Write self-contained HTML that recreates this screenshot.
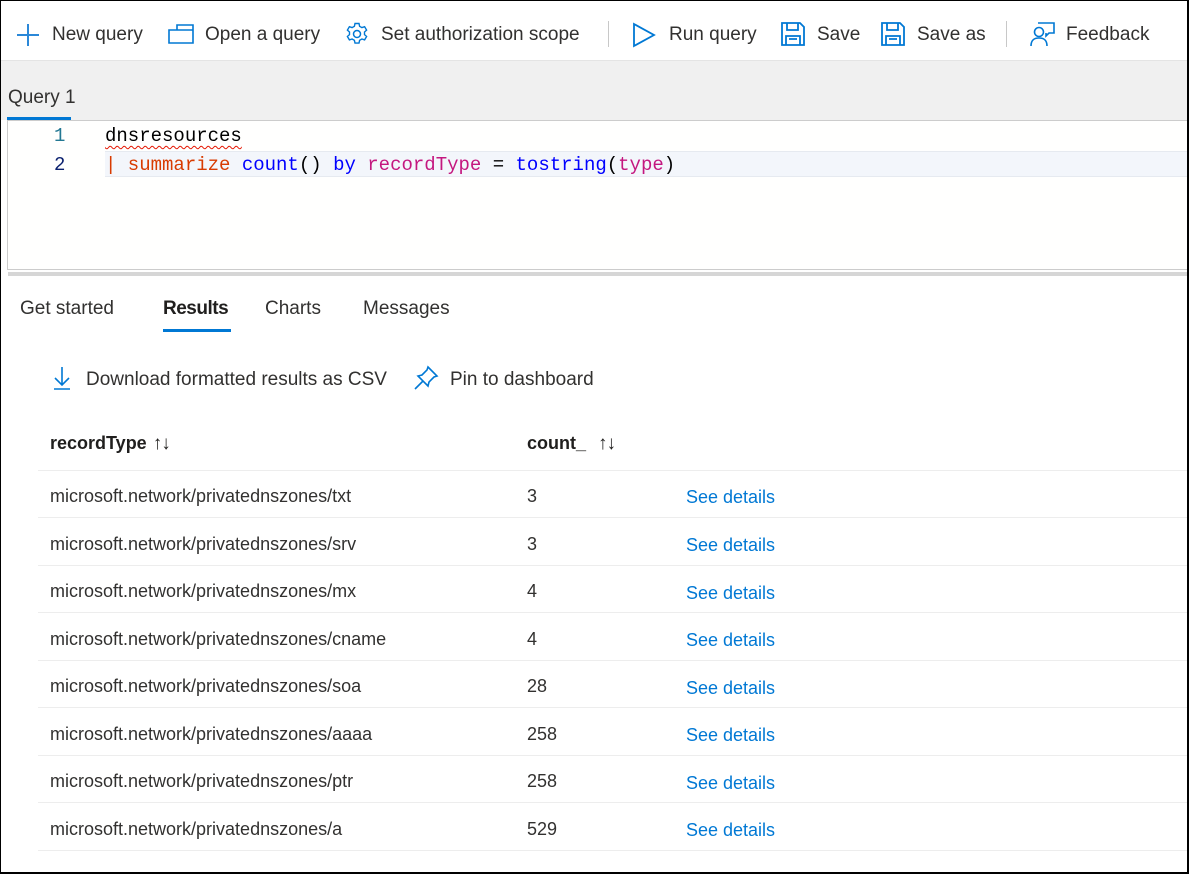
<!DOCTYPE html>
<html><head><style>
*{margin:0;padding:0;box-sizing:border-box}
body{width:1189px;height:874px;overflow:hidden;background:#fff;font-family:"Liberation Sans",sans-serif;color:#323130;position:relative}
.frame{position:absolute;left:0;top:0;width:1189px;height:874px;border:1px solid #000;border-right-width:2px;border-bottom-width:2px;pointer-events:none;z-index:10}
.a{position:absolute;white-space:nowrap}
.tb{font-size:19px;top:24px}
.ic{position:absolute}
.gray{position:absolute;left:1px;top:60px;width:1187px;height:60px;background:#f0f0f0;border-top:1px solid #e4e4e4}
.editor{position:absolute;left:7px;top:120px;width:1182px;height:150px;background:#fffffe;border-left:1px solid #ccc;border-top:1px solid #ccc;border-bottom:1px solid #ccc}
.code{font-family:"Liberation Mono",monospace;font-size:19px}
.row{position:absolute;left:38px;width:1150px;height:1px;background:#ededed}
.t{font-size:18px}
.lnk{color:#0078d4;font-size:18px}
.srt{font-weight:normal;font-size:19px;margin-left:6px;letter-spacing:-1px}
</style></head><body>
<div class="frame"></div>
<svg class="ic" style="left:16px;top:23px" width="24" height="24"><path d="M12 1V23M1 12H23" stroke="#2b88d8" stroke-width="2"/></svg>
<div class="a tb" style="left:52px">New query</div>
<svg class="ic" style="left:168px;top:24px" width="26" height="20"><path d="M1 6H9V1H25V19H1Z M9 6H25" fill="none" stroke="#0078d4" stroke-width="1.6"/></svg>
<div class="a tb" style="left:205px">Open a query</div>
<svg class="ic" style="left:345px;top:22px" width="24" height="24" viewBox="0 0 24 24"><circle cx="12" cy="12" r="3.5" fill="none" stroke="#0078d4" stroke-width="1.5"/><path d="M10 1.5h4l.6 2.8 2.3 1.3 2.7-.9 2 3.4-2.1 1.9v2.6l2.1 1.9-2 3.4-2.7-.9-2.3 1.3-.6 2.8h-4l-.6-2.8-2.3-1.3-2.7.9-2-3.4 2.1-1.9v-2.6L2.4 8.1l2-3.4 2.7.9 2.3-1.3z" fill="none" stroke="#0078d4" stroke-width="1.4"/></svg>
<div class="a tb" style="left:381px">Set authorization scope</div>
<div class="a" style="left:608px;top:21px;width:1px;height:26px;background:#c8c8c8"></div>
<svg class="ic" style="left:632px;top:22px" width="24" height="26"><path d="M2 2L22 13L2 24Z" fill="none" stroke="#0078d4" stroke-width="1.8"/></svg>
<div class="a tb" style="left:669px">Run query</div>
<svg class="ic" style="left:781px;top:22px" width="24" height="24"><path d="M1 1H19L23 5V23H1Z M6 1V8H17V1 M5 23V14H19V23 M8 17H16" fill="none" stroke="#0078d4" stroke-width="1.8"/></svg>
<div class="a tb" style="left:817px">Save</div>
<svg class="ic" style="left:881px;top:22px" width="24" height="24"><path d="M1 1H19L23 5V23H1Z M6 1V8H17V1 M5 23V14H19V23 M8 17H16" fill="none" stroke="#0078d4" stroke-width="1.8"/></svg>
<div class="a tb" style="left:917px">Save as</div>
<div class="a" style="left:1006px;top:21px;width:1px;height:26px;background:#c8c8c8"></div>
<svg class="ic" style="left:1029px;top:21px" width="26" height="26"><circle cx="10" cy="11" r="4.5" fill="none" stroke="#0078d4" stroke-width="1.6"/><path d="M2 25C2 19 5 17 10 17S18 19 18 25 M9 2H25V12H20L17 15V12" fill="none" stroke="#0078d4" stroke-width="1.6"/></svg>
<div class="a tb" style="left:1066px">Feedback</div>
<div class="gray"></div>
<div class="a" style="left:8px;top:87px;font-size:19px;color:#323130">Query 1</div>
<div class="a" style="left:7px;top:117px;width:64px;height:3px;background:#0078d4"></div>
<div class="editor"></div>
<div class="a" style="left:105px;top:151px;width:1084px;height:26px;background:#f3f6fb;border-top:1px solid #e6eaf0;border-bottom:1px solid #e6eaf0"></div>
<div class="a code" style="left:54px;top:125px;color:#237893">1</div>
<div class="a code" style="left:54px;top:154px;color:#0b216f">2</div>
<div class="a code" style="left:105px;top:125px;color:#000;text-decoration:underline wavy #e51400;text-underline-offset:4px;text-decoration-thickness:1px">dnsresources</div>
<div class="a code" style="left:105px;top:154px;color:#000"><span style="color:#d83b01">| summarize</span> <span style="color:#0000ff">count</span>() <span style="color:#0000ff">by</span> <span style="color:#c4177f">recordType</span> = <span style="color:#0000ff">tostring</span>(<span style="color:#c4177f">type</span>)</div>
<div class="a" style="left:8px;top:272px;width:1181px;height:4px;background:#d6d6d6"></div>
<div class="a" style="left:20px;top:298px;font-size:19px">Get started</div>
<div class="a" style="left:163px;top:298px;font-size:19px;font-weight:bold;color:#201f1e;letter-spacing:-0.5px">Results</div>
<div class="a" style="left:163px;top:329px;width:68px;height:3px;background:#0078d4"></div>
<div class="a" style="left:265px;top:298px;font-size:19px">Charts</div>
<div class="a" style="left:363px;top:298px;font-size:19px">Messages</div>
<svg class="ic" style="left:52px;top:366px" width="20" height="24"><path d="M10 1V19M3 12L10 19L17 12M2 23H18" fill="none" stroke="#0078d4" stroke-width="1.6"/></svg>
<div class="a" style="left:86px;top:369px;font-size:19px">Download formatted results as CSV</div>
<svg class="ic" style="left:413px;top:365px" width="26" height="26"><path d="M15 2L24 11L21 12L16 17L15 21L5 11L9 10L14 5Z M10 16L2 24" fill="none" stroke="#0078d4" stroke-width="1.6"/></svg>
<div class="a" style="left:450px;top:369px;font-size:19px">Pin to dashboard</div>
<div class="a t" style="left:50px;top:433px;font-weight:bold;color:#201f1e">recordType<span class="srt">↑↓</span></div>
<div class="a t" style="left:527px;top:433px;font-weight:bold;color:#201f1e">count_<span class="srt" style="margin-left:12px">↑↓</span></div>
<div class="row" style="top:470px"></div>
<div class="a t" style="left:50px;top:486px">microsoft.network/privatednszones/txt</div><div class="a t" style="left:527px;top:486px">3</div><div class="a lnk" style="left:686px;top:487px">See details</div>
<div class="row" style="top:517px"></div>
<div class="a t" style="left:50px;top:534px">microsoft.network/privatednszones/srv</div><div class="a t" style="left:527px;top:534px">3</div><div class="a lnk" style="left:686px;top:535px">See details</div>
<div class="row" style="top:565px"></div>
<div class="a t" style="left:50px;top:581px">microsoft.network/privatednszones/mx</div><div class="a t" style="left:527px;top:581px">4</div><div class="a lnk" style="left:686px;top:583px">See details</div>
<div class="row" style="top:612px"></div>
<div class="a t" style="left:50px;top:629px">microsoft.network/privatednszones/cname</div><div class="a t" style="left:527px;top:629px">4</div><div class="a lnk" style="left:686px;top:630px">See details</div>
<div class="row" style="top:660px"></div>
<div class="a t" style="left:50px;top:676px">microsoft.network/privatednszones/soa</div><div class="a t" style="left:527px;top:676px">28</div><div class="a lnk" style="left:686px;top:678px">See details</div>
<div class="row" style="top:707px"></div>
<div class="a t" style="left:50px;top:724px">microsoft.network/privatednszones/aaaa</div><div class="a t" style="left:527px;top:724px">258</div><div class="a lnk" style="left:686px;top:725px">See details</div>
<div class="row" style="top:755px"></div>
<div class="a t" style="left:50px;top:771px">microsoft.network/privatednszones/ptr</div><div class="a t" style="left:527px;top:771px">258</div><div class="a lnk" style="left:686px;top:773px">See details</div>
<div class="row" style="top:802px"></div>
<div class="a t" style="left:50px;top:819px">microsoft.network/privatednszones/a</div><div class="a t" style="left:527px;top:819px">529</div><div class="a lnk" style="left:686px;top:820px">See details</div>
<div class="row" style="top:850px"></div>
</body></html>
